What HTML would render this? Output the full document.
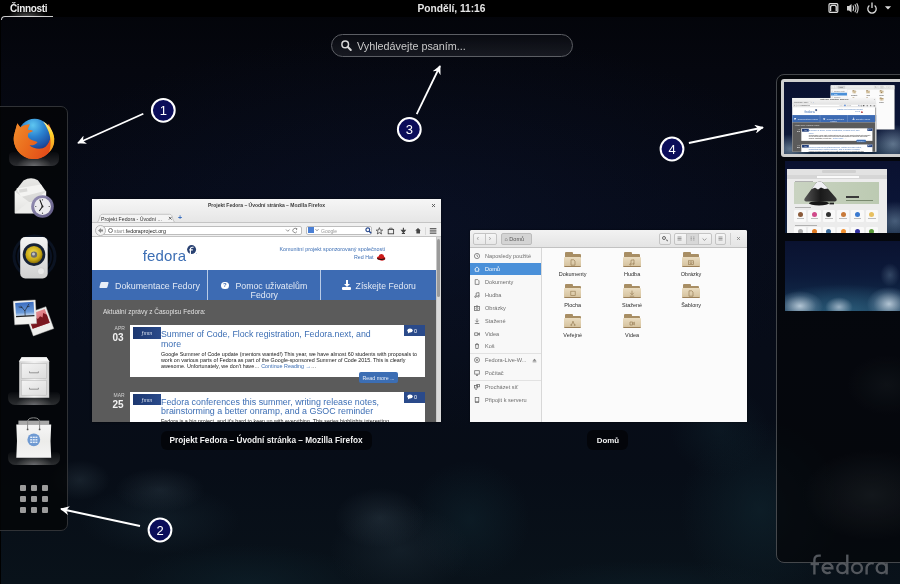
<!DOCTYPE html>
<html><head><meta charset="utf-8">
<style>
*{box-sizing:border-box;margin:0;padding:0}
html,body{width:900px;height:584px;overflow:hidden;background:#05070e;font-family:"Liberation Sans",sans-serif;position:relative}
.a{position:absolute}
.t{line-height:10px;white-space:nowrap}
.dot{width:6px;height:6px;background:#9c9c9c;border-radius:1px}
.glow{border-radius:4px 4px 7px 7px;background:radial-gradient(ellipse 35% 70% at 50% 100%,rgba(255,255,255,0.30),rgba(255,255,255,0) 100%),linear-gradient(rgba(255,255,255,0.02),rgba(255,255,255,0.16))}
.wall{background:radial-gradient(ellipse 80% 30% at 50% 100%,#12283e,rgba(0,0,0,0) 80%),linear-gradient(#0a1130,#0b1536 60%,#0e1e3c)}
.wall3{background:radial-gradient(ellipse 90% 45% at 50% 100%,#2a5a78,rgba(0,0,0,0) 85%),linear-gradient(#0a1230,#0c1a3a 50%,#13304e)}
#bg{left:0;top:0;width:900px;height:584px;background:
 radial-gradient(ellipse 30px 20px at 80px 480px, rgba(60,78,90,0.30), rgba(0,0,0,0) 100%),
 radial-gradient(ellipse 45px 22px at 160px 490px, rgba(60,78,90,0.30), rgba(0,0,0,0) 100%),
 radial-gradient(ellipse 80px 35px at 160px 520px, rgba(30,50,62,0.35), rgba(0,0,0,0) 100%),
 radial-gradient(ellipse 45px 30px at 380px 518px, rgba(60,78,90,0.32), rgba(0,0,0,0) 100%),
 radial-gradient(ellipse 70px 45px at 400px 550px, rgba(40,58,70,0.32), rgba(0,0,0,0) 100%),
 radial-gradient(ellipse 60px 60px at 470px 520px, rgba(16,38,48,0.5), rgba(0,0,0,0) 100%),
 radial-gradient(ellipse 50px 45px at 720px 430px, rgba(16,36,46,0.45), rgba(0,0,0,0) 100%),
 radial-gradient(ellipse 80px 90px at 760px 510px, rgba(16,38,48,0.6), rgba(0,0,0,0) 100%),
 radial-gradient(ellipse 120px 40px at 250px 584px, rgba(14,34,44,0.6), rgba(0,0,0,0) 100%),
 radial-gradient(ellipse 140px 30px at 650px 590px, rgba(14,34,44,0.5), rgba(0,0,0,0) 100%),
 radial-gradient(ellipse 420px 200px at 420px 230px, rgba(14,24,52,0.40), rgba(0,0,0,0) 100%),
 linear-gradient(180deg,#030409 0%,#05070f 12%,#060a17 35%,#070c18 60%,#070d17 80%,#09121a 100%);}
</style></head><body>
<div id="bg" class="a"></div>
<div class="a" style="left:0;top:0;width:900px;height:584px;will-change:transform"><div class="a" id="left-edge" style="left:0;top:0;width:1px;height:584px;background:#000"></div>
<!-- TOP BAR -->
<div class="a" style="left:0;top:0;width:900px;height:17px;background:#000"></div>
<div class="a t" style="left:10px;top:3.5px;font-size:10px;font-weight:bold;color:#ececec;letter-spacing:-0.35px">Činnosti</div>
<div class="a" style="left:1px;top:16px;width:52px;height:4px;border-top:1.5px solid #e0e0e0;border-left:1.5px solid #e0e0e0;border-top-left-radius:4px;opacity:0.9"></div>
<div class="a" style="left:6px;top:10px;width:42px;height:7px;background:radial-gradient(ellipse at 50% 100%,rgba(255,255,255,0.35),rgba(255,255,255,0) 70%)"></div>
<div class="a t" style="left:417.5px;top:3.5px;font-size:10.2px;font-weight:bold;color:#e6e6e6">Pondělí, 11:16</div>
<svg class="a" style="left:826px;top:1px" width="70" height="14" viewBox="0 0 70 14">
 <rect x="3" y="2.7" width="8.8" height="8.6" rx="1" fill="none" stroke="#dcdcdc" stroke-width="1.2"/>
 <path d="M4.6 10.2 L4.6 5.4 L5.8 4.3 L9 4.3 L10.2 5.4 L10.2 10.2" fill="none" stroke="#dcdcdc" stroke-width="1.3"/>
 <path d="M21 5 L23 5 L25.5 3 L25.5 11.5 L23 9.5 L21 9.5 Z" fill="#d0d0d0"/>
 <path d="M27 4.5 Q28.5 7.2 27 10 M28.9 3.2 Q31.2 7.2 28.9 11.3 M30.7 2.2 Q33.6 7.2 30.7 12.2" fill="none" stroke="#d6d6d6" stroke-width="1.1"/>
 <path d="M43.4 4.6 A4.2 4.2 0 1 0 48.6 4.6" fill="none" stroke="#dcdcdc" stroke-width="1.3"/>
 <path d="M46 1.4 L46 7" stroke="#dcdcdc" stroke-width="1.3"/>
 <path d="M58.9 5.2 L65.1 5.2 L62 8.4 Z" fill="#dcdcdc"/>
</svg>
<!-- SEARCH -->
<div class="a" style="left:331px;top:34px;width:242px;height:23px;border:1px solid #5c5e64;border-radius:12px;background:linear-gradient(rgba(10,12,18,0.9),rgba(30,32,40,0.75))"></div>
<svg class="a" style="left:340px;top:39px" width="13" height="13" viewBox="0 0 13 13">
 <circle cx="5.2" cy="5.4" r="3.3" fill="none" stroke="#d8d8d8" stroke-width="1.5"/>
 <path d="M7.6 7.8 L10.8 11" stroke="#d8d8d8" stroke-width="2" stroke-linecap="round"/>
</svg>
<div class="a t" style="left:357px;top:40.5px;font-size:10.8px;color:#c9c9c9">Vyhledávejte psaním...</div>
<!-- WINDOW LABELS -->
<div class="a" style="left:161px;top:431px;width:211px;height:19px;border-radius:6px;background:rgba(0,0,0,0.55)"></div>
<div class="a t" style="left:169.5px;top:436.3px;font-size:8.25px;font-weight:bold;color:#f0f0f0">Projekt Fedora – Úvodní stránka – Mozilla Firefox</div>
<div class="a" style="left:587px;top:430px;width:41px;height:20px;border-radius:6px;background:rgba(0,0,0,0.55)"></div>
<div class="a t" style="left:596.7px;top:436px;font-size:7.9px;font-weight:bold;color:#f0f0f0">Domů</div>
<!-- DASH -->
<div class="a" style="left:-8px;top:106px;width:76px;height:425px;border:1px solid #303236;border-radius:7px;background:rgba(4,5,6,0.78)"></div>
<!-- running glows -->
<div class="a glow" style="left:9px;top:152px;width:50px;height:14px"></div>
<div class="a glow" style="left:8px;top:392px;width:52px;height:13px"></div>
<div class="a glow" style="left:8px;top:452px;width:52px;height:13px"></div>
<!-- firefox -->
<svg class="a" style="left:12px;top:117px" width="44" height="44" viewBox="0 0 44 44">
 <defs>
  <radialGradient id="ffg" cx="0.45" cy="0.2" r="0.8"><stop offset="0" stop-color="#5ec6f0"/><stop offset="0.45" stop-color="#2a82d0"/><stop offset="0.8" stop-color="#1f56a8"/><stop offset="1" stop-color="#1a3886"/></radialGradient>
  <linearGradient id="ffo" x1="0" y1="0.1" x2="1" y2="0.6"><stop offset="0" stop-color="#f08a2a"/><stop offset="0.5" stop-color="#ea6a1c"/><stop offset="1" stop-color="#e24a1a"/></linearGradient>
  <linearGradient id="ffy" x1="0" y1="0" x2="0" y2="1"><stop offset="0" stop-color="#fff2a0"/><stop offset="0.4" stop-color="#ffd22a"/><stop offset="1" stop-color="#f39020"/></linearGradient>
 </defs>
 <path d="M2.3 17 A20.2 20.2 0 1 0 42 19.5 L37 7 L22.6 18 Z" fill="url(#ffo)"/>
 <path d="M2.3 17 L5.3 6.2 L9 11 Z" fill="#ef7a22"/>
 <circle cx="22.6" cy="18" r="16.2" fill="url(#ffg)"/>
 <path d="M5.3 6.4 L8 10.5 C11 8 15 7.5 18 7.2 C17 9.5 16 11 15.8 12.8 C18 13 20 13.2 21.1 13.9 C19.5 15 17.5 15.5 16.6 15.8 C15.8 17.5 15.8 19.5 16.2 20.3 C17 22 20 23.5 25.6 24.9 C24 27.5 21 28.6 17.5 28.2 C21 31.5 29 33.5 34 29.5 C36.5 27 38 24 38.6 20 L42.1 21 A20.2 20.2 0 1 1 2.1 18 Z" fill="url(#ffo)"/>
 <path d="M31 4.5 C39 9 43 17 42.2 25 C41.8 29 40 32.5 37 35.5 C39.5 28 39 19 35.5 12 C34.5 9.5 33 7 31 4.5 Z" fill="url(#ffy)"/>
</svg>
<!-- mail (evolution) -->
<svg class="a" style="left:13px;top:176px" width="44" height="44" viewBox="0 0 44 44">
 <defs><linearGradient id="env" x1="0" y1="0" x2="0" y2="1"><stop offset="0" stop-color="#e8e8e6"/><stop offset="1" stop-color="#cfcfcd"/></linearGradient>
 <linearGradient id="envf" x1="0" y1="0" x2="0" y2="1"><stop offset="0" stop-color="#f6f6f4"/><stop offset="1" stop-color="#e2e2e0"/></linearGradient>
 <linearGradient id="clk" x1="0" y1="0" x2="1" y2="1"><stop offset="0" stop-color="#9a94b8"/><stop offset="1" stop-color="#5c5680"/></linearGradient></defs>
 <path d="M1.8 15.6 L10.5 4.6 Q17.7 0.2 24.9 4.2 L33.1 15.6 L33.1 37.2 L1.8 37.2 Z" fill="url(#env)"/>
 <path d="M3.5 12.5 L28 8.5 L31.5 15 L8 21 Z" fill="#f4f4f2"/>
 <rect x="6" y="13.5" width="8" height="3.4" fill="#dadad8" transform="rotate(-9 6 13.5)"/>
 <path d="M1.8 15.6 L17.5 27 L33.1 15.6 L33.1 37.2 L1.8 37.2 Z" fill="url(#envf)"/>
 <path d="M1.8 37.2 L15 26 L20 26 L33.1 37.2 Z" fill="#ededeb"/>
 <circle cx="29.5" cy="30.5" r="11.3" fill="url(#clk)"/>
 <circle cx="29.5" cy="30.5" r="8.4" fill="#ecebee"/>
 <path d="M29.5 30.5 L26.8 23.6 M29.5 30.5 L26.3 35" stroke="#1a1a1a" stroke-width="1.1" fill="none"/>
 <circle cx="29.5" cy="30.5" r="1" fill="#222"/>
 <circle cx="29.5" cy="23.8" r="0.6" fill="#333"/><circle cx="36.2" cy="30.5" r="0.6" fill="#333"/><circle cx="29.5" cy="37.2" r="0.6" fill="#333"/><circle cx="22.8" cy="30.5" r="0.6" fill="#333"/>
</svg>
<!-- rhythmbox -->
<svg class="a" style="left:12px;top:234px" width="46" height="46" viewBox="0 0 46 46">
 <defs><linearGradient id="spk" x1="0" y1="0" x2="0" y2="1"><stop offset="0" stop-color="#f4f4f4"/><stop offset="1" stop-color="#d0d0d0"/></linearGradient>
 <radialGradient id="cone" cx="0.45" cy="0.4" r="0.6"><stop offset="0" stop-color="#f2dc52"/><stop offset="0.7" stop-color="#c8a814"/><stop offset="1" stop-color="#8a7008"/></radialGradient></defs>
 <circle cx="22.5" cy="22.5" r="20.5" fill="none" stroke="#0b1322" stroke-width="3"/>
 <circle cx="22.5" cy="22.5" r="16.5" fill="none" stroke="#0e1a30" stroke-width="2" opacity="0.7"/>
 <rect x="8.2" y="3" width="27.5" height="41.4" rx="5" fill="url(#spk)"/>
 <circle cx="22" cy="20.6" r="11.3" fill="#172236"/>
 <circle cx="22" cy="20.6" r="8.6" fill="url(#cone)"/>
 <circle cx="22" cy="20.6" r="3.2" fill="#6c6c6c"/>
 <circle cx="21.5" cy="20" r="1.5" fill="#c4c4c4"/>
 <circle cx="29" cy="37.2" r="3.5" fill="#e8e8e8" stroke="#c4c4c4" stroke-width="0.5"/>
</svg>
<!-- shotwell -->
<svg class="a" style="left:10px;top:296px" width="48" height="44" viewBox="0 0 48 44">
 <defs><linearGradient id="sky" x1="0" y1="0" x2="0" y2="1"><stop offset="0" stop-color="#3a6cc0"/><stop offset="0.7" stop-color="#6a9ad8"/><stop offset="1" stop-color="#dfe9f5"/></linearGradient>
 <linearGradient id="rsky" x1="0" y1="0" x2="0" y2="1"><stop offset="0" stop-color="#e68a90"/><stop offset="1" stop-color="#c85a64"/></linearGradient></defs>
 <g transform="translate(15.45 18) rotate(-19.7)">
  <rect x="0" y="0" width="21.7" height="23.3" fill="#eeeeec" stroke="#c0c0c0" stroke-width="0.4"/>
  <rect x="1.8" y="1.8" width="18.1" height="14.5" fill="url(#rsky)"/>
  <path d="M1.8 10 L4 8 L6 10 L8 6 L10 9 L13 7 L15 9 L17 5 L19.9 8 L19.9 16.3 L1.8 16.3 Z" fill="#7a1820"/>
 </g>
 <g transform="translate(3.3 5.2) rotate(-3.4)">
  <rect x="0" y="0" width="22" height="23.7" fill="#f2f2f0" stroke="#c4c4c4" stroke-width="0.4"/>
  <rect x="1.8" y="1.8" width="18.4" height="14.2" fill="url(#sky)"/>
  <path d="M11 15.5 L11 10.5 M11 10.5 L7 5 M11 10.5 L15.5 3.5 M8.5 7 L5 6 M13.5 6.5 L16 6" stroke="#1a1a1a" stroke-width="0.6" fill="none"/>
  <rect x="1.8" y="15" width="18.4" height="1.3" fill="#222"/>
 </g>
</svg>
<!-- files -->
<svg class="a" style="left:18px;top:356px" width="32" height="44" viewBox="0 0 32 44">
 <defs><linearGradient id="cab" x1="0" y1="0" x2="1" y2="0"><stop offset="0" stop-color="#cfcfcf"/><stop offset="0.5" stop-color="#f2f2f2"/><stop offset="1" stop-color="#d4d4d4"/></linearGradient>
 <linearGradient id="drw" x1="0" y1="0" x2="1" y2="1"><stop offset="0" stop-color="#f4f4f4"/><stop offset="1" stop-color="#dcdcdc"/></linearGradient></defs>
 <path d="M3.6 1.2 L28.6 1.2 L31.2 5.3 L31.2 41.8 L1.2 41.8 L1.2 5.3 Z" fill="url(#cab)"/>
 <path d="M3.6 1.2 L28.6 1.2 L31.2 5.3 L1.2 5.3 Z" fill="#f6f6f6"/>
 <rect x="3.4" y="7.4" width="25.2" height="14.9" fill="url(#drw)" stroke="#b4b4b4" stroke-width="0.5"/>
 <rect x="3.4" y="24.3" width="25.2" height="14.9" fill="url(#drw)" stroke="#b4b4b4" stroke-width="0.5"/>
 <path d="M11.5 15.4 L11.5 16.8 L20.4 16.8 L20.4 15.4 M11.5 31.8 L11.5 33.2 L20.4 33.2 L20.4 31.8" fill="none" stroke="#8a8a8a" stroke-width="0.9"/>
</svg>
<!-- software -->
<svg class="a" style="left:14px;top:416px" width="40" height="44" viewBox="0 0 40 44">
 <defs><linearGradient id="bag" x1="0" y1="0" x2="0" y2="1"><stop offset="0" stop-color="#f6f6f6"/><stop offset="0.5" stop-color="#ececea"/><stop offset="1" stop-color="#f4f4f4"/></linearGradient></defs>
 <rect x="4.4" y="4.6" width="30.8" height="4" fill="#a8a8a8"/>
 <path d="M2.3 8.4 L37.2 8.4 Q35.8 25 37.2 41.8 L2.3 41.8 Q3.7 25 2.3 8.4 Z" fill="url(#bag)"/>
 <path d="M13.6 13.2 L13.6 6 Q13.6 1.8 19.6 1.8 Q25.6 1.8 25.6 6 L25.6 13.2" fill="none" stroke="#8a8a8a" stroke-width="1"/>
 <circle cx="13.6" cy="13.4" r="0.9" fill="#555"/><circle cx="25.6" cy="13.4" r="0.9" fill="#555"/>
 <circle cx="19.8" cy="23.8" r="6.4" fill="#6f9ad2"/>
 <g fill="#e4eefa"><rect x="16.2" y="20.6" width="2" height="1.4"/><rect x="18.8" y="20.6" width="2" height="1.4"/><rect x="21.4" y="20.6" width="2" height="1.4"/><rect x="16.2" y="23.1" width="2" height="1.4"/><rect x="18.8" y="23.1" width="2" height="1.4"/><rect x="21.4" y="23.1" width="2" height="1.4"/><rect x="16.2" y="25.6" width="2" height="1.4"/><rect x="18.8" y="25.6" width="2" height="1.4"/><rect x="21.4" y="25.6" width="2" height="1.4"/></g>
</svg>
<!-- app grid -->
<div class="a dot" style="left:20px;top:485px"></div><div class="a dot" style="left:31px;top:485px"></div><div class="a dot" style="left:42px;top:485px"></div>
<div class="a dot" style="left:20px;top:496px"></div><div class="a dot" style="left:31px;top:496px"></div><div class="a dot" style="left:42px;top:496px"></div>
<div class="a dot" style="left:20px;top:507px"></div><div class="a dot" style="left:31px;top:507px"></div><div class="a dot" style="left:42px;top:507px"></div>

<!-- FIREFOX WINDOW -->
<div class="a win" style="left:92px;top:199px;width:349px;height:223px;background:#fff;overflow:hidden;box-shadow:0 0 2px rgba(0,0,0,0.6)">
  <div class="a" style="left:0;top:0;width:349px;height:23px;background:linear-gradient(#f6f6f6,#e6e6e6)"></div>
  <div class="a t" style="left:116px;top:1.4px;font-size:5px;font-weight:bold;color:#3a3a3a">Projekt Fedora – Úvodní stránka – Mozilla Firefox</div>
  <svg class="a" style="left:338.5px;top:3.5px" width="5" height="5" viewBox="0 0 10 10"><path d="M2 2 L8 8 M8 2 L2 8" stroke="#555" stroke-width="1.8" fill="none"/></svg>
  <!-- tab -->
  <svg class="a" style="left:0;top:14px" width="100" height="10" viewBox="0 14 100 10"><path d="M0 23.5 L4.5 23.5 Q6 23.5 6.8 21 L8.2 16.6 Q8.8 15.3 10.5 15.3 L77.5 15.3 Q79.2 15.3 79.8 16.6 L81.2 21 Q82 23.5 83.5 23.5 L100 23.5" fill="#f4f4f4" stroke="#b4b4b4" stroke-width="0.7"/></svg>
  <div class="a t" style="left:9px;top:14.6px;font-size:5.2px;color:#333">Projekt Fedora - Úvodní ...</div>
  <svg class="a" style="left:76px;top:17px" width="4.5" height="4.5" viewBox="0 0 10 10"><path d="M2 2 L8 8 M8 2 L2 8" stroke="#444" stroke-width="1.7777777777777777" fill="none"/></svg>
  <div class="a t" style="left:86px;top:14.4px;font-size:7px;font-weight:bold;color:#3a6fc0">+</div>
  <!-- nav bar -->
  <div class="a" style="left:0;top:23px;width:349px;height:15px;background:#f0f0f0;border-top:1px solid #c4c4c4;border-bottom:1px solid #c4c4c4"></div>
  <div class="a" style="left:8px;top:27px;width:202px;height:9px;background:#fff;border:1px solid #bdbdbd;border-radius:2px"></div>
  <div class="a" style="left:2.5px;top:25.5px;width:11px;height:11px;background:#f4f4f4;border:1px solid #b8b8b8;border-radius:50%"></div>
  <svg class="a" style="left:4.5px;top:28px" width="7" height="7" viewBox="0 0 7 7"><path d="M1 3.5 L4 1 L4 2.6 L6 2.6 L6 4.4 L4 4.4 L4 6 Z" fill="#8a8a8a"/></svg>
  <div class="a" style="left:16px;top:29px;width:5px;height:5px;border:1px solid #777;border-radius:50%"></div>
  <div class="a t" style="left:22px;top:27px;font-size:5.3px;color:#8a8a8a">start.<span style="color:#222">fedoraproject.org</span></div>
  <svg class="a" style="left:193px;top:28px" width="14" height="7" viewBox="0 0 14 7"><path d="M1 2.5 L2.8 4.3 L4.6 2.5" stroke="#666" stroke-width="0.7" fill="none"/><path d="M11.8 2.2 A2.2 2.2 0 1 0 12 4.5" stroke="#666" stroke-width="0.7" fill="none"/><path d="M10.6 1.2 L12.4 1.6 L11.8 3.2 Z" fill="#666"/></svg>
  <div class="a" style="left:213.5px;top:26.5px;width:66px;height:9px;background:#fff;border:1px solid #bdbdbd;border-radius:2px"></div>
  <div class="a" style="left:216px;top:28px;width:6px;height:6px;background:#4a7fd4"></div>
  <svg class="a" style="left:222.5px;top:29px" width="4" height="4" viewBox="0 0 4 4"><path d="M0.5 1.2 L2 2.8 L3.5 1.2" stroke="#666" stroke-width="0.7" fill="none"/></svg><div class="a t" style="left:229px;top:27px;font-size:5px;color:#999">Google</div>
  <svg class="a" style="left:272.5px;top:27.8px" width="7" height="7" viewBox="0 0 7 7"><circle cx="2.8" cy="2.8" r="1.9" fill="none" stroke="#22448a" stroke-width="1.1"/><path d="M4.2 4.2 L6.2 6.2" stroke="#22448a" stroke-width="1.4"/></svg>
  <svg class="a" style="left:280px;top:27px" width="68" height="10" viewBox="0 0 68 10">
   <path d="M7.4 1.6 L8.3 4.1 L10.6 4.1 L8.8 5.6 L9.5 8 L7.4 6.6 L5.3 8 L6 5.6 L4.2 4.1 L6.5 4.1 Z" fill="none" stroke="#444" stroke-width="0.8"/>
   <rect x="16.2" y="3.4" width="5.4" height="4.4" fill="none" stroke="#444" stroke-width="0.9"/>
   <path d="M17.6 3.4 L17.6 2.2 L20.2 2.2 L20.2 3.4" fill="none" stroke="#444" stroke-width="0.7"/>
   <path d="M31.4 1.8 L31.4 5 M29.6 4.2 L31.4 6.6 L33.2 4.2 Z" stroke="#444" stroke-width="1.1" fill="#444"/>
   <rect x="29.8" y="7" width="3.2" height="1" fill="#444"/>
   <path d="M43.2 4.6 L46 2 L48.8 4.6 L48 4.6 L48 7.6 L44.4 7.6 L44.4 4.6 Z" fill="#444"/>
   <rect x="53.3" y="1.2" width="0.6" height="7.6" fill="#c8c8c8"/>
   <rect x="57.8" y="2.2" width="6.6" height="1.1" fill="#444"/>
   <rect x="57.8" y="4.4" width="6.6" height="1.1" fill="#444"/>
   <rect x="57.8" y="6.6" width="6.6" height="1.1" fill="#444"/>
  </svg>
  <!-- page header -->
  <div class="a" style="left:50.8px;top:45.7px;font-size:15px;line-height:22px;color:#3c6eb4;letter-spacing:0.15px">fedora</div>
  <svg class="a" style="left:95px;top:45.6px" width="10" height="10" viewBox="0 0 10 10"><circle cx="4.6" cy="4.6" r="4.5" fill="#294172"/><path d="M3.4 9 L3.4 4.2 Q3.4 2.2 5.4 2.2 L6.6 2.2 M2.2 4.9 L5.8 4.9" stroke="#fff" stroke-width="1.15" fill="none"/><circle cx="9.4" cy="8.6" r="0.4" fill="#3c6eb4"/></svg>
  <div class="a t" style="left:187.5px;top:45px;font-size:5.4px;color:#3c6eb4">Komunitní projekt sponzorovaný společností</div>
  <div class="a t" style="left:262px;top:52.7px;font-size:5.3px;color:#3c6eb4">Red Hat</div>
  <svg class="a" style="left:283.5px;top:53.5px" width="10" height="9" viewBox="0 0 10 9"><path d="M1 5.5 Q0.5 3.5 2.5 3.5 Q3 0.8 5.5 1 Q8 1.2 8.2 3.8 Q9.8 4.5 9.2 6.2 Q8 8 5 7.6 Q1.5 7.2 1 5.5 Z" fill="#cc1a1a"/><path d="M1.2 5.6 Q5 7.4 9 5.8" stroke="#111" stroke-width="1" fill="none"/></svg>
  <!-- blue nav -->
  <div class="a" style="left:0;top:71px;width:349px;height:30px;background:#3d6bb3"></div>
  <div class="a" style="left:114.5px;top:71px;width:1px;height:30px;background:#b9cbe6"></div>
  <div class="a" style="left:228.2px;top:71px;width:1px;height:30px;background:#b9cbe6"></div>
  <div class="a" style="left:8px;top:83px;width:8px;height:6px;background:#e8eef8;transform:skewX(-15deg);border-radius:1px"></div>
  <div class="a t" style="left:23px;top:81.5px;font-size:8.9px;color:#e3eaf5">Dokumentace Fedory</div>
  <div class="a" style="left:129px;top:82.5px;width:7.5px;height:7.5px;border-radius:50%;background:#fff;color:#3d6bb3;font-size:6px;line-height:7.5px;text-align:center;font-weight:bold">?</div>
  <div class="a t" style="left:143.4px;top:81.5px;font-size:8.8px;color:#e3eaf5">Pomoc uživatelům</div>
  <div class="a t" style="left:158.6px;top:90.7px;font-size:8.8px;color:#e3eaf5">Fedory</div>
  <div class="a" style="left:250px;top:88px;width:9px;height:3px;background:#fff;border-radius:1px"></div>
  <div class="a" style="left:253.5px;top:81px;width:2px;height:5px;background:#fff"></div>
  <div class="a" style="left:251.5px;top:84.5px;width:0;height:0;border-left:3px solid transparent;border-right:3px solid transparent;border-top:3px solid #fff"></div>
  <div class="a t" style="left:263.6px;top:81.5px;font-size:8.7px;color:#e3eaf5">Získejte Fedoru</div>
  <!-- grey news -->
  <div class="a" style="left:0;top:101px;width:349px;height:122px;background:#5b5b5b"></div>
  <div class="a t" style="left:11px;top:108.3px;font-size:6.5px;color:#e0e0e0">Aktuální zprávy z Časopisu Fedora:</div>
  <div class="a t" style="left:22.6px;top:124px;font-size:5px;color:#cfcfcf">APR</div>
  <div class="a t" style="left:20.5px;top:133.5px;font-size:10px;font-weight:bold;color:#f2f2f2">03</div>
  <div class="a" style="left:38.3px;top:126px;width:294.7px;height:52.4px;background:#fff"></div>
  <div class="a" style="left:41px;top:128px;width:28px;height:11.7px;background:linear-gradient(90deg,#1c3770,#2a4a8a);"></div>
  <div class="a t" style="left:49px;top:128.8px;font-size:5px;color:#dfe6f2;font-style:italic">ƒmm</div>
  <div class="a t" style="left:69px;top:130.1px;font-size:8.8px;color:#3c6eb4;white-space:nowrap">Summer of Code, Flock registration, Fedora.next, and</div>
  <div class="a t" style="left:69px;top:139.6px;font-size:8.8px;color:#3c6eb4">more</div>
  <div class="a" style="left:69px;top:151.8px;width:260px;font-size:5.36px;line-height:6.1px;color:#1a1a1a">Google Summer of Code update (mentors wanted!) This year, we have almost 60 students with proposals to work on various parts of Fedora as part of the Google-sponsored Summer of Code 2015. This is clearly awesome. Unfortunately, we don't have… <span style="color:#3c6eb4">Continue Reading →</span>…</div>
  <div class="a" style="left:311.9px;top:126px;width:21px;height:11px;background:#2a4a8a"></div>
  <svg class="a" style="left:314.5px;top:128.5px" width="6" height="6" viewBox="0 0 6 6"><ellipse cx="3" cy="2.6" rx="2.7" ry="2" fill="#fff"/><path d="M1.2 3.8 L0.8 5.6 L2.8 4.3 Z" fill="#fff"/></svg><div class="a t" style="left:322px;top:126.5px;font-size:5.5px;color:#fff">0</div>
  <div class="a" style="left:267px;top:173.4px;width:38.7px;height:10.2px;background:#3c6eb4;border-radius:2px"></div>
  <div class="a t" style="left:270.5px;top:173.5px;font-size:5.3px;color:#e8eef8">Read more ...</div>
  <div class="a t" style="left:21.5px;top:191.3px;font-size:5px;color:#cfcfcf">MAR</div>
  <div class="a t" style="left:20.5px;top:200.7px;font-size:10px;font-weight:bold;color:#f2f2f2">25</div>
  <div class="a" style="left:38.3px;top:192.8px;width:294.7px;height:40px;background:#fff"></div>
  <div class="a" style="left:41px;top:194.8px;width:28px;height:11.7px;background:linear-gradient(90deg,#1c3770,#2a4a8a);"></div>
  <div class="a t" style="left:49px;top:195.6px;font-size:5px;color:#dfe6f2;font-style:italic">ƒmm</div>
  <div class="a t" style="left:69px;top:198px;font-size:8.9px;color:#3c6eb4;white-space:nowrap">Fedora conferences this summer, writing release notes,</div>
  <div class="a t" style="left:69px;top:207px;font-size:8.9px;color:#3c6eb4;white-space:nowrap">brainstorming a better onramp, and a GSOC reminder</div>
  <div class="a t" style="left:69px;top:216.5px;font-size:5.36px;color:#1a1a1a;white-space:nowrap">Fedora is a big project, and it's hard to keep up with everything. This series highlights interesting</div>
  <div class="a" style="left:311.9px;top:192.8px;width:21px;height:11px;background:#2a4a8a"></div>
  <svg class="a" style="left:314.5px;top:195.3px" width="6" height="6" viewBox="0 0 6 6"><ellipse cx="3" cy="2.6" rx="2.7" ry="2" fill="#fff"/><path d="M1.2 3.8 L0.8 5.6 L2.8 4.3 Z" fill="#fff"/></svg><div class="a t" style="left:322px;top:193.3px;font-size:5.5px;color:#fff">0</div>
  <!-- scrollbar -->
  <div class="a" style="left:344px;top:38px;width:5px;height:185px;background:#d9d9d9;border-left:1px solid #c8c8c8"></div>
  <div class="a" style="left:345px;top:40px;width:3px;height:58px;background:#9a9a9a;border-radius:2px"></div>
</div>

<!-- NAUTILUS WINDOW -->
<div class="a win" style="left:470px;top:230px;width:277px;height:192px;background:#fbfbfb;overflow:hidden;border-radius:2px 2px 0 0;box-shadow:0 0 2px rgba(0,0,0,0.6)">
  <div class="a" style="left:0;top:0;width:277px;height:17.5px;background:linear-gradient(#f2f2f2,#e4e4e4);border-bottom:1px solid #c2c2c2"></div>
  <div class="a" style="left:2.7px;top:2.7px;width:24px;height:12.3px;background:linear-gradient(#f6f6f6,#e8e8e8);border:1px solid #c4c4c4;border-radius:2px"></div>
  <div class="a" style="left:14.5px;top:3px;width:1px;height:12px;background:#c4c4c4"></div>
  <div class="a t" style="left:6.5px;top:3.6px;font-size:8px;color:#999">‹</div>
  <div class="a t" style="left:18.5px;top:3.6px;font-size:8px;color:#999">›</div>
  <div class="a" style="left:30.5px;top:2.7px;width:31.2px;height:12.3px;background:#d4d4d4;border:1px solid #bcbcbc;border-radius:2px"></div>
  <div class="a t" style="left:34.5px;top:3.8px;font-size:5.5px;color:#555">⌂ Domů</div>
  <div class="a" style="left:188.6px;top:2.7px;width:12.7px;height:12.3px;background:linear-gradient(#f6f6f6,#e8e8e8);border:1px solid #c4c4c4;border-radius:2px"></div>
  <div class="a" style="left:192.3px;top:6px;width:4px;height:4px;border:1px solid #666;border-radius:50%"></div>
  <div class="a" style="left:196px;top:9.5px;width:2.2px;height:1px;background:#666;transform:rotate(45deg)"></div>
  <div class="a" style="left:203.5px;top:2.7px;width:38px;height:12.3px;background:linear-gradient(#f6f6f6,#e8e8e8);border:1px solid #c4c4c4;border-radius:2px"></div>
  <div class="a" style="left:216px;top:2.7px;width:12.5px;height:12.3px;background:#d8d8d8;border:1px solid #c4c4c4"></div>
  <svg class="a" style="left:207.3px;top:6.4px" width="5" height="5" viewBox="0 0 5 5"><path d="M0.5 1 L4.5 1 M0.5 2.5 L4.5 2.5 M0.5 4 L4.5 4" stroke="#666" stroke-width="0.6"/></svg>
  <svg class="a" style="left:219.8px;top:6.4px" width="5" height="5" viewBox="0 0 5 5"><path d="M0.5 1 L2 1 M3 1 L4.5 1 M0.5 2.5 L2 2.5 M3 2.5 L4.5 2.5 M0.5 4 L2 4 M3 4 L4.5 4" stroke="#888" stroke-width="0.6"/></svg>
  <svg class="a" style="left:232px;top:6.5px" width="5" height="5" viewBox="0 0 5 5"><path d="M0.6 1.5 L2.5 3.4 L4.4 1.5" stroke="#666" stroke-width="0.6" fill="none"/></svg>
  <div class="a" style="left:244.7px;top:2.7px;width:11.8px;height:12.3px;background:linear-gradient(#f6f6f6,#e8e8e8);border:1px solid #c4c4c4;border-radius:2px"></div>
  <svg class="a" style="left:248.1px;top:6.4px" width="5" height="5" viewBox="0 0 5 5"><path d="M0.5 1 L4.5 1 M0.5 2.5 L4.5 2.5 M0.5 4 L4.5 4" stroke="#666" stroke-width="0.6"/></svg>
  <div class="a" style="left:259.6px;top:3px;width:1px;height:12px;background:#cfcfcf"></div>
  <svg class="a" style="left:266px;top:6.3px" width="5" height="5" viewBox="0 0 10 10"><path d="M2 2 L8 8 M8 2 L2 8" stroke="#777" stroke-width="1.4" fill="none"/></svg>
  <!-- sidebar -->
  <div class="a" style="left:0;top:18px;width:71.5px;height:174px;background:#f8f8f8;border-right:1px solid #d8d8d8"></div>
  <div class="a" style="left:0;top:32.8px;width:71px;height:12px;background:#4a90d9"></div>
  <div class="a" style="left:0;top:123.3px;width:71px;height:1px;background:#e2e2e2"></div>
  <div class="a" style="left:0;top:149.7px;width:71px;height:1px;background:#e2e2e2"></div>
  <div class="a t" style="left:15px;top:21px;font-size:5.6px;color:#6e6e6e">Naposledy použité</div>
  <div class="a t" style="left:15px;top:33.8px;font-size:5.6px;color:#fff">Domů</div>
  <div class="a t" style="left:15px;top:47px;font-size:5.6px;color:#6e6e6e">Dokumenty</div>
  <div class="a t" style="left:15px;top:59.8px;font-size:5.6px;color:#6e6e6e">Hudba</div>
  <div class="a t" style="left:15px;top:72.5px;font-size:5.6px;color:#6e6e6e">Obrázky</div>
  <div class="a t" style="left:15px;top:85.7px;font-size:5.6px;color:#6e6e6e">Stažené</div>
  <div class="a t" style="left:15px;top:98.6px;font-size:5.6px;color:#6e6e6e">Videa</div>
  <div class="a t" style="left:15px;top:111.3px;font-size:5.6px;color:#6e6e6e">Koš</div>
  <div class="a t" style="left:15px;top:125px;font-size:5.6px;color:#6e6e6e">Fedora-Live-W...</div>
  <div class="a t" style="left:15px;top:138px;font-size:5.6px;color:#6e6e6e">Počítač</div>
  <div class="a t" style="left:15px;top:151.7px;font-size:5.6px;color:#6e6e6e">Procházet síť</div>
  <div class="a t" style="left:15px;top:165px;font-size:5.6px;color:#6e6e6e">Připojit k serveru</div>
  <svg class="a" style="left:4.4px;top:23px" width="6" height="6" viewBox="0 0 6 6"><g fill="none" stroke="#6a6a6a" stroke-width="0.75"><circle cx="3" cy="3" r="2.6"/><path d="M3 1.6 L3 3 L4 3.8"/></g></svg>
  <svg class="a" style="left:4.4px;top:35.8px" width="6" height="6" viewBox="0 0 6 6"><g fill="none" stroke="#fff" stroke-width="0.75"><path d="M0.6 3.2 L3 0.9 L5.4 3.2 M1.3 2.6 L1.3 5.3 L4.7 5.3 L4.7 2.6"/></g></svg>
  <svg class="a" style="left:4.4px;top:49px" width="6" height="6" viewBox="0 0 6 6"><g fill="none" stroke="#6a6a6a" stroke-width="0.75"><path d="M1.2 0.6 L3.8 0.6 L5 1.8 L5 5.4 L1.2 5.4 Z"/></g></svg>
  <svg class="a" style="left:4.4px;top:61.8px" width="6" height="6" viewBox="0 0 6 6"><g fill="none" stroke="#6a6a6a" stroke-width="0.75"><path d="M2.2 4.6 L2.2 1 L5 0.6 L5 4.2"/><circle cx="1.5" cy="4.7" r="0.8"/><circle cx="4.3" cy="4.3" r="0.8"/></g></svg>
  <svg class="a" style="left:4.4px;top:74.5px" width="6" height="6" viewBox="0 0 6 6"><g fill="none" stroke="#6a6a6a" stroke-width="0.75"><rect x="0.6" y="1.6" width="4.8" height="3.8"/><circle cx="3" cy="3.5" r="1"/><path d="M2 1.6 L2.4 0.8 L3.6 0.8 L4 1.6"/></g></svg>
  <svg class="a" style="left:4.4px;top:87.7px" width="6" height="6" viewBox="0 0 6 6"><g fill="none" stroke="#6a6a6a" stroke-width="0.75"><path d="M3 0.5 L3 4 M1.4 2.6 L3 4.3 L4.6 2.6 M0.8 5.5 L5.2 5.5"/></g></svg>
  <svg class="a" style="left:4.4px;top:100.6px" width="6" height="6" viewBox="0 0 6 6"><g fill="none" stroke="#6a6a6a" stroke-width="0.75"><path d="M0.6 1.8 L3.8 1.8 L3.8 4.4 L0.6 4.4 Z M3.8 3.1 L5.5 1.9 L5.5 4.3 Z"/></g></svg>
  <svg class="a" style="left:4.4px;top:113.3px" width="6" height="6" viewBox="0 0 6 6"><g fill="none" stroke="#6a6a6a" stroke-width="0.75"><path d="M1 1.6 L5 1.6 M1.5 1.6 L1.8 5.5 L4.2 5.5 L4.5 1.6 M2.3 1.6 L2.3 0.7 L3.7 0.7 L3.7 1.6"/></g></svg>
  <svg class="a" style="left:4.4px;top:127px" width="6" height="6" viewBox="0 0 6 6"><g fill="none" stroke="#6a6a6a" stroke-width="0.75"><circle cx="3" cy="3" r="2.5"/><circle cx="3" cy="3" r="0.7"/></g></svg>
  <svg class="a" style="left:4.4px;top:140px" width="6" height="6" viewBox="0 0 6 6"><g fill="none" stroke="#6a6a6a" stroke-width="0.75"><rect x="0.7" y="0.7" width="4.6" height="3.4"/><path d="M2 5.4 L4 5.4 M3 4.1 L3 5.4"/></g></svg>
  <svg class="a" style="left:4.4px;top:153.7px" width="6" height="6" viewBox="0 0 6 6"><g fill="none" stroke="#6a6a6a" stroke-width="0.75"><rect x="0.5" y="1.5" width="3" height="2.5"/><rect x="2.8" y="0.6" width="2.7" height="2.2"/><path d="M1.2 5.3 L3 5.3"/></g></svg>
  <svg class="a" style="left:4.4px;top:167px" width="6" height="6" viewBox="0 0 6 6"><g fill="none" stroke="#6a6a6a" stroke-width="0.75"><rect x="1.2" y="0.6" width="3.6" height="4.2"/><path d="M1 5.5 L5 5.5"/></g></svg>
  <svg class="a" style="left:62px;top:127.5px" width="5" height="5" viewBox="0 0 5 5"><path d="M0.6 2.8 L2.5 0.8 L4.4 2.8 Z M0.6 3.6 L4.4 3.6 L4.4 4.3 L0.6 4.3 Z" fill="#777"/></svg>
  <div class="a" style="left:95px;top:22.3px;width:8px;height:4px;background:#a88e64;border-radius:1px 1px 0 0"></div>
  <div class="a" style="left:95px;top:24.3px;width:16px;height:5px;background:#a88e64;border-radius:1px"></div>
  <div class="a" style="left:94px;top:27.0px;width:17.4px;height:10.3px;background:linear-gradient(#eadcc0,#d6c39f);border-bottom:1px solid #9c8058;border-radius:1px"></div>
  <svg class="a" style="left:99.7px;top:28.6px" width="6" height="7" viewBox="0 0 6 7"><g fill="none" stroke="#9a8058" stroke-width="0.7"><path d="M1 0.8 L3.8 0.8 L5 2 L5 6.2 L1 6.2 Z"/></g></svg>
  <div class="a t" style="left:72.7px;width:60px;text-align:center;top:39.10000000000002px;font-size:5.5px;color:#2a2a2a">Dokumenty</div>
  <div class="a" style="left:154.4px;top:22.3px;width:8px;height:4px;background:#a88e64;border-radius:1px 1px 0 0"></div>
  <div class="a" style="left:154.4px;top:24.3px;width:16px;height:5px;background:#a88e64;border-radius:1px"></div>
  <div class="a" style="left:153.4px;top:27.0px;width:17.4px;height:10.3px;background:linear-gradient(#eadcc0,#d6c39f);border-bottom:1px solid #9c8058;border-radius:1px"></div>
  <svg class="a" style="left:159.1px;top:28.6px" width="6" height="7" viewBox="0 0 6 7"><g fill="none" stroke="#9a8058" stroke-width="0.7"><path d="M2 5.4 L2 1.2 L5 0.8 L5 4.8"/><circle cx="1.4" cy="5.4" r="0.7"/><circle cx="4.4" cy="4.9" r="0.7"/></g></svg>
  <div class="a t" style="left:132.1px;width:60px;text-align:center;top:39.10000000000002px;font-size:5.5px;color:#2a2a2a">Hudba</div>
  <div class="a" style="left:213.4px;top:22.3px;width:8px;height:4px;background:#a88e64;border-radius:1px 1px 0 0"></div>
  <div class="a" style="left:213.4px;top:24.3px;width:16px;height:5px;background:#a88e64;border-radius:1px"></div>
  <div class="a" style="left:212.4px;top:27.0px;width:17.4px;height:10.3px;background:linear-gradient(#eadcc0,#d6c39f);border-bottom:1px solid #9c8058;border-radius:1px"></div>
  <svg class="a" style="left:218.1px;top:28.6px" width="6" height="7" viewBox="0 0 6 7"><g fill="none" stroke="#9a8058" stroke-width="0.7"><rect x="0.6" y="1.8" width="4.8" height="3.8"/><circle cx="3" cy="3.7" r="1"/></g></svg>
  <div class="a t" style="left:191.1px;width:60px;text-align:center;top:39.10000000000002px;font-size:5.5px;color:#2a2a2a">Obrázky</div>
  <div class="a" style="left:95px;top:53.5px;width:8px;height:4px;background:#a88e64;border-radius:1px 1px 0 0"></div>
  <div class="a" style="left:95px;top:55.5px;width:16px;height:5px;background:#a88e64;border-radius:1px"></div>
  <div class="a" style="left:94px;top:58.2px;width:17.4px;height:10.3px;background:linear-gradient(#eadcc0,#d6c39f);border-bottom:1px solid #9c8058;border-radius:1px"></div>
  <svg class="a" style="left:99.7px;top:59.8px" width="6" height="7" viewBox="0 0 6 7"><g fill="none" stroke="#9a8058" stroke-width="0.7"><rect x="0.8" y="1.2" width="4.4" height="4.4"/></g></svg>
  <div class="a t" style="left:72.7px;width:60px;text-align:center;top:69.89999999999998px;font-size:5.5px;color:#2a2a2a">Plocha</div>
  <div class="a" style="left:154.4px;top:53.5px;width:8px;height:4px;background:#a88e64;border-radius:1px 1px 0 0"></div>
  <div class="a" style="left:154.4px;top:55.5px;width:16px;height:5px;background:#a88e64;border-radius:1px"></div>
  <div class="a" style="left:153.4px;top:58.2px;width:17.4px;height:10.3px;background:linear-gradient(#eadcc0,#d6c39f);border-bottom:1px solid #9c8058;border-radius:1px"></div>
  <svg class="a" style="left:159.1px;top:59.8px" width="6" height="7" viewBox="0 0 6 7"><g fill="none" stroke="#9a8058" stroke-width="0.7"><path d="M3 0.6 L3 4.6 M1.2 2.8 L3 4.8 L4.8 2.8 M0.8 6.2 L5.2 6.2"/></g></svg>
  <div class="a t" style="left:132.1px;width:60px;text-align:center;top:69.89999999999998px;font-size:5.5px;color:#2a2a2a">Stažené</div>
  <div class="a" style="left:213.4px;top:53.5px;width:8px;height:4px;background:#a88e64;border-radius:1px 1px 0 0"></div>
  <div class="a" style="left:213.4px;top:55.5px;width:16px;height:5px;background:#a88e64;border-radius:1px"></div>
  <div class="a" style="left:212.4px;top:58.2px;width:17.4px;height:10.3px;background:linear-gradient(#eadcc0,#d6c39f);border-bottom:1px solid #9c8058;border-radius:1px"></div>
  <svg class="a" style="left:218.1px;top:59.8px" width="6" height="7" viewBox="0 0 6 7"><g fill="none" stroke="#9a8058" stroke-width="0.7"><path d="M1 0.8 L3.8 0.8 L5 2 L5 6.2 L1 6.2 Z"/></g></svg>
  <div class="a t" style="left:191.1px;width:60px;text-align:center;top:69.89999999999998px;font-size:5.5px;color:#2a2a2a">Šablony</div>
  <div class="a" style="left:95px;top:83.5px;width:8px;height:4px;background:#a88e64;border-radius:1px 1px 0 0"></div>
  <div class="a" style="left:95px;top:85.5px;width:16px;height:5px;background:#a88e64;border-radius:1px"></div>
  <div class="a" style="left:94px;top:88.2px;width:17.4px;height:10.3px;background:linear-gradient(#eadcc0,#d6c39f);border-bottom:1px solid #9c8058;border-radius:1px"></div>
  <svg class="a" style="left:99.7px;top:89.8px" width="6" height="7" viewBox="0 0 6 7"><g fill="none" stroke="#9a8058" stroke-width="0.7"><circle cx="1.3" cy="5" r="0.6"/><circle cx="3" cy="2" r="0.6"/><circle cx="4.7" cy="5" r="0.6"/><path d="M1.6 4.5 L2.7 2.5 M3.3 2.5 L4.4 4.5"/></g></svg>
  <div class="a t" style="left:72.7px;width:60px;text-align:center;top:100.39999999999998px;font-size:5.5px;color:#2a2a2a">Veřejné</div>
  <div class="a" style="left:154.4px;top:83.5px;width:8px;height:4px;background:#a88e64;border-radius:1px 1px 0 0"></div>
  <div class="a" style="left:154.4px;top:85.5px;width:16px;height:5px;background:#a88e64;border-radius:1px"></div>
  <div class="a" style="left:153.4px;top:88.2px;width:17.4px;height:10.3px;background:linear-gradient(#eadcc0,#d6c39f);border-bottom:1px solid #9c8058;border-radius:1px"></div>
  <svg class="a" style="left:159.1px;top:89.8px" width="6" height="7" viewBox="0 0 6 7"><g fill="none" stroke="#9a8058" stroke-width="0.7"><path d="M1 2 L3.6 2 L3.6 5 L1 5 Z M3.6 3.5 L5.4 2.2 L5.4 4.8 Z"/></g></svg>
  <div class="a t" style="left:132.1px;width:60px;text-align:center;top:100.39999999999998px;font-size:5.5px;color:#2a2a2a">Videa</div>
</div>
<!-- WORKSPACES -->
<div class="a" style="left:776px;top:74px;width:141px;height:489px;border:1px solid #45484c;border-radius:8px;background:radial-gradient(ellipse 70px 45px at 95px 420px, rgba(60,66,70,0.26), rgba(0,0,0,0) 100%),radial-gradient(ellipse 40px 30px at 110px 310px, rgba(60,66,70,0.16), rgba(0,0,0,0) 100%),radial-gradient(ellipse 30px 25px at 60px 205px, rgba(60,64,68,0.15), rgba(0,0,0,0) 100%),rgba(4,6,8,0.7)"></div>
<div class="a" style="left:781px;top:79px;width:125px;height:78px;border:3px solid #d0d0d0;border-radius:3px;background:#000"></div>
<div class="a wall" style="left:784px;top:82px;width:116px;height:71.7px;overflow:hidden">
 <div class="a" style="left:-16px;top:52px;width:44px;height:30px;border-radius:50%;background:radial-gradient(ellipse,rgba(150,175,195,0.6),rgba(40,70,100,0) 70%)"></div>
 <div class="a" style="left:84px;top:42px;width:50px;height:40px;border-radius:50%;background:radial-gradient(ellipse,rgba(150,175,195,0.6),rgba(40,70,100,0) 70%)"></div>
 <div class="a" style="left:-62.17000000000003px;top:-49.73px;width:0;height:0;transform:scale(0.231);transform-origin:0 0">
<!-- NAUTILUS WINDOW -->
<div class="a win" style="left:470px;top:230px;width:277px;height:192px;background:#fbfbfb;overflow:hidden;border-radius:2px 2px 0 0;box-shadow:0 0 2px rgba(0,0,0,0.6)">
  <div class="a" style="left:0;top:0;width:277px;height:17.5px;background:linear-gradient(#f2f2f2,#e4e4e4);border-bottom:1px solid #c2c2c2"></div>
  <div class="a" style="left:2.7px;top:2.7px;width:24px;height:12.3px;background:linear-gradient(#f6f6f6,#e8e8e8);border:1px solid #c4c4c4;border-radius:2px"></div>
  <div class="a" style="left:14.5px;top:3px;width:1px;height:12px;background:#c4c4c4"></div>
  <div class="a t" style="left:6.5px;top:3.6px;font-size:8px;color:#999">‹</div>
  <div class="a t" style="left:18.5px;top:3.6px;font-size:8px;color:#999">›</div>
  <div class="a" style="left:30.5px;top:2.7px;width:31.2px;height:12.3px;background:#d4d4d4;border:1px solid #bcbcbc;border-radius:2px"></div>
  <div class="a t" style="left:34.5px;top:3.8px;font-size:5.5px;color:#555">⌂ Domů</div>
  <div class="a" style="left:188.6px;top:2.7px;width:12.7px;height:12.3px;background:linear-gradient(#f6f6f6,#e8e8e8);border:1px solid #c4c4c4;border-radius:2px"></div>
  <div class="a" style="left:192.3px;top:6px;width:4px;height:4px;border:1px solid #666;border-radius:50%"></div>
  <div class="a" style="left:196px;top:9.5px;width:2.2px;height:1px;background:#666;transform:rotate(45deg)"></div>
  <div class="a" style="left:203.5px;top:2.7px;width:38px;height:12.3px;background:linear-gradient(#f6f6f6,#e8e8e8);border:1px solid #c4c4c4;border-radius:2px"></div>
  <div class="a" style="left:216px;top:2.7px;width:12.5px;height:12.3px;background:#d8d8d8;border:1px solid #c4c4c4"></div>
  <svg class="a" style="left:207.3px;top:6.4px" width="5" height="5" viewBox="0 0 5 5"><path d="M0.5 1 L4.5 1 M0.5 2.5 L4.5 2.5 M0.5 4 L4.5 4" stroke="#666" stroke-width="0.6"/></svg>
  <svg class="a" style="left:219.8px;top:6.4px" width="5" height="5" viewBox="0 0 5 5"><path d="M0.5 1 L2 1 M3 1 L4.5 1 M0.5 2.5 L2 2.5 M3 2.5 L4.5 2.5 M0.5 4 L2 4 M3 4 L4.5 4" stroke="#888" stroke-width="0.6"/></svg>
  <svg class="a" style="left:232px;top:6.5px" width="5" height="5" viewBox="0 0 5 5"><path d="M0.6 1.5 L2.5 3.4 L4.4 1.5" stroke="#666" stroke-width="0.6" fill="none"/></svg>
  <div class="a" style="left:244.7px;top:2.7px;width:11.8px;height:12.3px;background:linear-gradient(#f6f6f6,#e8e8e8);border:1px solid #c4c4c4;border-radius:2px"></div>
  <svg class="a" style="left:248.1px;top:6.4px" width="5" height="5" viewBox="0 0 5 5"><path d="M0.5 1 L4.5 1 M0.5 2.5 L4.5 2.5 M0.5 4 L4.5 4" stroke="#666" stroke-width="0.6"/></svg>
  <div class="a" style="left:259.6px;top:3px;width:1px;height:12px;background:#cfcfcf"></div>
  <svg class="a" style="left:266px;top:6.3px" width="5" height="5" viewBox="0 0 10 10"><path d="M2 2 L8 8 M8 2 L2 8" stroke="#777" stroke-width="1.4" fill="none"/></svg>
  <!-- sidebar -->
  <div class="a" style="left:0;top:18px;width:71.5px;height:174px;background:#f8f8f8;border-right:1px solid #d8d8d8"></div>
  <div class="a" style="left:0;top:32.8px;width:71px;height:12px;background:#4a90d9"></div>
  <div class="a" style="left:0;top:123.3px;width:71px;height:1px;background:#e2e2e2"></div>
  <div class="a" style="left:0;top:149.7px;width:71px;height:1px;background:#e2e2e2"></div>
  <div class="a t" style="left:15px;top:21px;font-size:5.6px;color:#6e6e6e">Naposledy použité</div>
  <div class="a t" style="left:15px;top:33.8px;font-size:5.6px;color:#fff">Domů</div>
  <div class="a t" style="left:15px;top:47px;font-size:5.6px;color:#6e6e6e">Dokumenty</div>
  <div class="a t" style="left:15px;top:59.8px;font-size:5.6px;color:#6e6e6e">Hudba</div>
  <div class="a t" style="left:15px;top:72.5px;font-size:5.6px;color:#6e6e6e">Obrázky</div>
  <div class="a t" style="left:15px;top:85.7px;font-size:5.6px;color:#6e6e6e">Stažené</div>
  <div class="a t" style="left:15px;top:98.6px;font-size:5.6px;color:#6e6e6e">Videa</div>
  <div class="a t" style="left:15px;top:111.3px;font-size:5.6px;color:#6e6e6e">Koš</div>
  <div class="a t" style="left:15px;top:125px;font-size:5.6px;color:#6e6e6e">Fedora-Live-W...</div>
  <div class="a t" style="left:15px;top:138px;font-size:5.6px;color:#6e6e6e">Počítač</div>
  <div class="a t" style="left:15px;top:151.7px;font-size:5.6px;color:#6e6e6e">Procházet síť</div>
  <div class="a t" style="left:15px;top:165px;font-size:5.6px;color:#6e6e6e">Připojit k serveru</div>
  <svg class="a" style="left:4.4px;top:23px" width="6" height="6" viewBox="0 0 6 6"><g fill="none" stroke="#6a6a6a" stroke-width="0.75"><circle cx="3" cy="3" r="2.6"/><path d="M3 1.6 L3 3 L4 3.8"/></g></svg>
  <svg class="a" style="left:4.4px;top:35.8px" width="6" height="6" viewBox="0 0 6 6"><g fill="none" stroke="#fff" stroke-width="0.75"><path d="M0.6 3.2 L3 0.9 L5.4 3.2 M1.3 2.6 L1.3 5.3 L4.7 5.3 L4.7 2.6"/></g></svg>
  <svg class="a" style="left:4.4px;top:49px" width="6" height="6" viewBox="0 0 6 6"><g fill="none" stroke="#6a6a6a" stroke-width="0.75"><path d="M1.2 0.6 L3.8 0.6 L5 1.8 L5 5.4 L1.2 5.4 Z"/></g></svg>
  <svg class="a" style="left:4.4px;top:61.8px" width="6" height="6" viewBox="0 0 6 6"><g fill="none" stroke="#6a6a6a" stroke-width="0.75"><path d="M2.2 4.6 L2.2 1 L5 0.6 L5 4.2"/><circle cx="1.5" cy="4.7" r="0.8"/><circle cx="4.3" cy="4.3" r="0.8"/></g></svg>
  <svg class="a" style="left:4.4px;top:74.5px" width="6" height="6" viewBox="0 0 6 6"><g fill="none" stroke="#6a6a6a" stroke-width="0.75"><rect x="0.6" y="1.6" width="4.8" height="3.8"/><circle cx="3" cy="3.5" r="1"/><path d="M2 1.6 L2.4 0.8 L3.6 0.8 L4 1.6"/></g></svg>
  <svg class="a" style="left:4.4px;top:87.7px" width="6" height="6" viewBox="0 0 6 6"><g fill="none" stroke="#6a6a6a" stroke-width="0.75"><path d="M3 0.5 L3 4 M1.4 2.6 L3 4.3 L4.6 2.6 M0.8 5.5 L5.2 5.5"/></g></svg>
  <svg class="a" style="left:4.4px;top:100.6px" width="6" height="6" viewBox="0 0 6 6"><g fill="none" stroke="#6a6a6a" stroke-width="0.75"><path d="M0.6 1.8 L3.8 1.8 L3.8 4.4 L0.6 4.4 Z M3.8 3.1 L5.5 1.9 L5.5 4.3 Z"/></g></svg>
  <svg class="a" style="left:4.4px;top:113.3px" width="6" height="6" viewBox="0 0 6 6"><g fill="none" stroke="#6a6a6a" stroke-width="0.75"><path d="M1 1.6 L5 1.6 M1.5 1.6 L1.8 5.5 L4.2 5.5 L4.5 1.6 M2.3 1.6 L2.3 0.7 L3.7 0.7 L3.7 1.6"/></g></svg>
  <svg class="a" style="left:4.4px;top:127px" width="6" height="6" viewBox="0 0 6 6"><g fill="none" stroke="#6a6a6a" stroke-width="0.75"><circle cx="3" cy="3" r="2.5"/><circle cx="3" cy="3" r="0.7"/></g></svg>
  <svg class="a" style="left:4.4px;top:140px" width="6" height="6" viewBox="0 0 6 6"><g fill="none" stroke="#6a6a6a" stroke-width="0.75"><rect x="0.7" y="0.7" width="4.6" height="3.4"/><path d="M2 5.4 L4 5.4 M3 4.1 L3 5.4"/></g></svg>
  <svg class="a" style="left:4.4px;top:153.7px" width="6" height="6" viewBox="0 0 6 6"><g fill="none" stroke="#6a6a6a" stroke-width="0.75"><rect x="0.5" y="1.5" width="3" height="2.5"/><rect x="2.8" y="0.6" width="2.7" height="2.2"/><path d="M1.2 5.3 L3 5.3"/></g></svg>
  <svg class="a" style="left:4.4px;top:167px" width="6" height="6" viewBox="0 0 6 6"><g fill="none" stroke="#6a6a6a" stroke-width="0.75"><rect x="1.2" y="0.6" width="3.6" height="4.2"/><path d="M1 5.5 L5 5.5"/></g></svg>
  <svg class="a" style="left:62px;top:127.5px" width="5" height="5" viewBox="0 0 5 5"><path d="M0.6 2.8 L2.5 0.8 L4.4 2.8 Z M0.6 3.6 L4.4 3.6 L4.4 4.3 L0.6 4.3 Z" fill="#777"/></svg>
  <div class="a" style="left:95px;top:22.3px;width:8px;height:4px;background:#a88e64;border-radius:1px 1px 0 0"></div>
  <div class="a" style="left:95px;top:24.3px;width:16px;height:5px;background:#a88e64;border-radius:1px"></div>
  <div class="a" style="left:94px;top:27.0px;width:17.4px;height:10.3px;background:linear-gradient(#eadcc0,#d6c39f);border-bottom:1px solid #9c8058;border-radius:1px"></div>
  <svg class="a" style="left:99.7px;top:28.6px" width="6" height="7" viewBox="0 0 6 7"><g fill="none" stroke="#9a8058" stroke-width="0.7"><path d="M1 0.8 L3.8 0.8 L5 2 L5 6.2 L1 6.2 Z"/></g></svg>
  <div class="a t" style="left:72.7px;width:60px;text-align:center;top:39.10000000000002px;font-size:5.5px;color:#2a2a2a">Dokumenty</div>
  <div class="a" style="left:154.4px;top:22.3px;width:8px;height:4px;background:#a88e64;border-radius:1px 1px 0 0"></div>
  <div class="a" style="left:154.4px;top:24.3px;width:16px;height:5px;background:#a88e64;border-radius:1px"></div>
  <div class="a" style="left:153.4px;top:27.0px;width:17.4px;height:10.3px;background:linear-gradient(#eadcc0,#d6c39f);border-bottom:1px solid #9c8058;border-radius:1px"></div>
  <svg class="a" style="left:159.1px;top:28.6px" width="6" height="7" viewBox="0 0 6 7"><g fill="none" stroke="#9a8058" stroke-width="0.7"><path d="M2 5.4 L2 1.2 L5 0.8 L5 4.8"/><circle cx="1.4" cy="5.4" r="0.7"/><circle cx="4.4" cy="4.9" r="0.7"/></g></svg>
  <div class="a t" style="left:132.1px;width:60px;text-align:center;top:39.10000000000002px;font-size:5.5px;color:#2a2a2a">Hudba</div>
  <div class="a" style="left:213.4px;top:22.3px;width:8px;height:4px;background:#a88e64;border-radius:1px 1px 0 0"></div>
  <div class="a" style="left:213.4px;top:24.3px;width:16px;height:5px;background:#a88e64;border-radius:1px"></div>
  <div class="a" style="left:212.4px;top:27.0px;width:17.4px;height:10.3px;background:linear-gradient(#eadcc0,#d6c39f);border-bottom:1px solid #9c8058;border-radius:1px"></div>
  <svg class="a" style="left:218.1px;top:28.6px" width="6" height="7" viewBox="0 0 6 7"><g fill="none" stroke="#9a8058" stroke-width="0.7"><rect x="0.6" y="1.8" width="4.8" height="3.8"/><circle cx="3" cy="3.7" r="1"/></g></svg>
  <div class="a t" style="left:191.1px;width:60px;text-align:center;top:39.10000000000002px;font-size:5.5px;color:#2a2a2a">Obrázky</div>
  <div class="a" style="left:95px;top:53.5px;width:8px;height:4px;background:#a88e64;border-radius:1px 1px 0 0"></div>
  <div class="a" style="left:95px;top:55.5px;width:16px;height:5px;background:#a88e64;border-radius:1px"></div>
  <div class="a" style="left:94px;top:58.2px;width:17.4px;height:10.3px;background:linear-gradient(#eadcc0,#d6c39f);border-bottom:1px solid #9c8058;border-radius:1px"></div>
  <svg class="a" style="left:99.7px;top:59.8px" width="6" height="7" viewBox="0 0 6 7"><g fill="none" stroke="#9a8058" stroke-width="0.7"><rect x="0.8" y="1.2" width="4.4" height="4.4"/></g></svg>
  <div class="a t" style="left:72.7px;width:60px;text-align:center;top:69.89999999999998px;font-size:5.5px;color:#2a2a2a">Plocha</div>
  <div class="a" style="left:154.4px;top:53.5px;width:8px;height:4px;background:#a88e64;border-radius:1px 1px 0 0"></div>
  <div class="a" style="left:154.4px;top:55.5px;width:16px;height:5px;background:#a88e64;border-radius:1px"></div>
  <div class="a" style="left:153.4px;top:58.2px;width:17.4px;height:10.3px;background:linear-gradient(#eadcc0,#d6c39f);border-bottom:1px solid #9c8058;border-radius:1px"></div>
  <svg class="a" style="left:159.1px;top:59.8px" width="6" height="7" viewBox="0 0 6 7"><g fill="none" stroke="#9a8058" stroke-width="0.7"><path d="M3 0.6 L3 4.6 M1.2 2.8 L3 4.8 L4.8 2.8 M0.8 6.2 L5.2 6.2"/></g></svg>
  <div class="a t" style="left:132.1px;width:60px;text-align:center;top:69.89999999999998px;font-size:5.5px;color:#2a2a2a">Stažené</div>
  <div class="a" style="left:213.4px;top:53.5px;width:8px;height:4px;background:#a88e64;border-radius:1px 1px 0 0"></div>
  <div class="a" style="left:213.4px;top:55.5px;width:16px;height:5px;background:#a88e64;border-radius:1px"></div>
  <div class="a" style="left:212.4px;top:58.2px;width:17.4px;height:10.3px;background:linear-gradient(#eadcc0,#d6c39f);border-bottom:1px solid #9c8058;border-radius:1px"></div>
  <svg class="a" style="left:218.1px;top:59.8px" width="6" height="7" viewBox="0 0 6 7"><g fill="none" stroke="#9a8058" stroke-width="0.7"><path d="M1 0.8 L3.8 0.8 L5 2 L5 6.2 L1 6.2 Z"/></g></svg>
  <div class="a t" style="left:191.1px;width:60px;text-align:center;top:69.89999999999998px;font-size:5.5px;color:#2a2a2a">Šablony</div>
  <div class="a" style="left:95px;top:83.5px;width:8px;height:4px;background:#a88e64;border-radius:1px 1px 0 0"></div>
  <div class="a" style="left:95px;top:85.5px;width:16px;height:5px;background:#a88e64;border-radius:1px"></div>
  <div class="a" style="left:94px;top:88.2px;width:17.4px;height:10.3px;background:linear-gradient(#eadcc0,#d6c39f);border-bottom:1px solid #9c8058;border-radius:1px"></div>
  <svg class="a" style="left:99.7px;top:89.8px" width="6" height="7" viewBox="0 0 6 7"><g fill="none" stroke="#9a8058" stroke-width="0.7"><circle cx="1.3" cy="5" r="0.6"/><circle cx="3" cy="2" r="0.6"/><circle cx="4.7" cy="5" r="0.6"/><path d="M1.6 4.5 L2.7 2.5 M3.3 2.5 L4.4 4.5"/></g></svg>
  <div class="a t" style="left:72.7px;width:60px;text-align:center;top:100.39999999999998px;font-size:5.5px;color:#2a2a2a">Veřejné</div>
  <div class="a" style="left:154.4px;top:83.5px;width:8px;height:4px;background:#a88e64;border-radius:1px 1px 0 0"></div>
  <div class="a" style="left:154.4px;top:85.5px;width:16px;height:5px;background:#a88e64;border-radius:1px"></div>
  <div class="a" style="left:153.4px;top:88.2px;width:17.4px;height:10.3px;background:linear-gradient(#eadcc0,#d6c39f);border-bottom:1px solid #9c8058;border-radius:1px"></div>
  <svg class="a" style="left:159.1px;top:89.8px" width="6" height="7" viewBox="0 0 6 7"><g fill="none" stroke="#9a8058" stroke-width="0.7"><path d="M1 2 L3.6 2 L3.6 5 L1 5 Z M3.6 3.5 L5.4 2.2 L5.4 4.8 Z"/></g></svg>
  <div class="a t" style="left:132.1px;width:60px;text-align:center;top:100.39999999999998px;font-size:5.5px;color:#2a2a2a">Videa</div>
</div>
</div>
 <div class="a" style="left:-13.971999999999955px;top:-31.958999999999996px;width:0;height:0;transform:scale(0.241);transform-origin:0 0">
<!-- FIREFOX WINDOW -->
<div class="a win" style="left:92px;top:199px;width:349px;height:223px;background:#fff;overflow:hidden;box-shadow:0 0 2px rgba(0,0,0,0.6)">
  <div class="a" style="left:0;top:0;width:349px;height:23px;background:linear-gradient(#f6f6f6,#e6e6e6)"></div>
  <div class="a t" style="left:116px;top:1.4px;font-size:5px;font-weight:bold;color:#3a3a3a">Projekt Fedora – Úvodní stránka – Mozilla Firefox</div>
  <svg class="a" style="left:338.5px;top:3.5px" width="5" height="5" viewBox="0 0 10 10"><path d="M2 2 L8 8 M8 2 L2 8" stroke="#555" stroke-width="1.8" fill="none"/></svg>
  <!-- tab -->
  <svg class="a" style="left:0;top:14px" width="100" height="10" viewBox="0 14 100 10"><path d="M0 23.5 L4.5 23.5 Q6 23.5 6.8 21 L8.2 16.6 Q8.8 15.3 10.5 15.3 L77.5 15.3 Q79.2 15.3 79.8 16.6 L81.2 21 Q82 23.5 83.5 23.5 L100 23.5" fill="#f4f4f4" stroke="#b4b4b4" stroke-width="0.7"/></svg>
  <div class="a t" style="left:9px;top:14.6px;font-size:5.2px;color:#333">Projekt Fedora - Úvodní ...</div>
  <svg class="a" style="left:76px;top:17px" width="4.5" height="4.5" viewBox="0 0 10 10"><path d="M2 2 L8 8 M8 2 L2 8" stroke="#444" stroke-width="1.7777777777777777" fill="none"/></svg>
  <div class="a t" style="left:86px;top:14.4px;font-size:7px;font-weight:bold;color:#3a6fc0">+</div>
  <!-- nav bar -->
  <div class="a" style="left:0;top:23px;width:349px;height:15px;background:#f0f0f0;border-top:1px solid #c4c4c4;border-bottom:1px solid #c4c4c4"></div>
  <div class="a" style="left:8px;top:27px;width:202px;height:9px;background:#fff;border:1px solid #bdbdbd;border-radius:2px"></div>
  <div class="a" style="left:2.5px;top:25.5px;width:11px;height:11px;background:#f4f4f4;border:1px solid #b8b8b8;border-radius:50%"></div>
  <svg class="a" style="left:4.5px;top:28px" width="7" height="7" viewBox="0 0 7 7"><path d="M1 3.5 L4 1 L4 2.6 L6 2.6 L6 4.4 L4 4.4 L4 6 Z" fill="#8a8a8a"/></svg>
  <div class="a" style="left:16px;top:29px;width:5px;height:5px;border:1px solid #777;border-radius:50%"></div>
  <div class="a t" style="left:22px;top:27px;font-size:5.3px;color:#8a8a8a">start.<span style="color:#222">fedoraproject.org</span></div>
  <svg class="a" style="left:193px;top:28px" width="14" height="7" viewBox="0 0 14 7"><path d="M1 2.5 L2.8 4.3 L4.6 2.5" stroke="#666" stroke-width="0.7" fill="none"/><path d="M11.8 2.2 A2.2 2.2 0 1 0 12 4.5" stroke="#666" stroke-width="0.7" fill="none"/><path d="M10.6 1.2 L12.4 1.6 L11.8 3.2 Z" fill="#666"/></svg>
  <div class="a" style="left:213.5px;top:26.5px;width:66px;height:9px;background:#fff;border:1px solid #bdbdbd;border-radius:2px"></div>
  <div class="a" style="left:216px;top:28px;width:6px;height:6px;background:#4a7fd4"></div>
  <svg class="a" style="left:222.5px;top:29px" width="4" height="4" viewBox="0 0 4 4"><path d="M0.5 1.2 L2 2.8 L3.5 1.2" stroke="#666" stroke-width="0.7" fill="none"/></svg><div class="a t" style="left:229px;top:27px;font-size:5px;color:#999">Google</div>
  <svg class="a" style="left:272.5px;top:27.8px" width="7" height="7" viewBox="0 0 7 7"><circle cx="2.8" cy="2.8" r="1.9" fill="none" stroke="#22448a" stroke-width="1.1"/><path d="M4.2 4.2 L6.2 6.2" stroke="#22448a" stroke-width="1.4"/></svg>
  <svg class="a" style="left:280px;top:27px" width="68" height="10" viewBox="0 0 68 10">
   <path d="M7.4 1.6 L8.3 4.1 L10.6 4.1 L8.8 5.6 L9.5 8 L7.4 6.6 L5.3 8 L6 5.6 L4.2 4.1 L6.5 4.1 Z" fill="none" stroke="#444" stroke-width="0.8"/>
   <rect x="16.2" y="3.4" width="5.4" height="4.4" fill="none" stroke="#444" stroke-width="0.9"/>
   <path d="M17.6 3.4 L17.6 2.2 L20.2 2.2 L20.2 3.4" fill="none" stroke="#444" stroke-width="0.7"/>
   <path d="M31.4 1.8 L31.4 5 M29.6 4.2 L31.4 6.6 L33.2 4.2 Z" stroke="#444" stroke-width="1.1" fill="#444"/>
   <rect x="29.8" y="7" width="3.2" height="1" fill="#444"/>
   <path d="M43.2 4.6 L46 2 L48.8 4.6 L48 4.6 L48 7.6 L44.4 7.6 L44.4 4.6 Z" fill="#444"/>
   <rect x="53.3" y="1.2" width="0.6" height="7.6" fill="#c8c8c8"/>
   <rect x="57.8" y="2.2" width="6.6" height="1.1" fill="#444"/>
   <rect x="57.8" y="4.4" width="6.6" height="1.1" fill="#444"/>
   <rect x="57.8" y="6.6" width="6.6" height="1.1" fill="#444"/>
  </svg>
  <!-- page header -->
  <div class="a" style="left:50.8px;top:45.7px;font-size:15px;line-height:22px;color:#3c6eb4;letter-spacing:0.15px">fedora</div>
  <svg class="a" style="left:95px;top:45.6px" width="10" height="10" viewBox="0 0 10 10"><circle cx="4.6" cy="4.6" r="4.5" fill="#294172"/><path d="M3.4 9 L3.4 4.2 Q3.4 2.2 5.4 2.2 L6.6 2.2 M2.2 4.9 L5.8 4.9" stroke="#fff" stroke-width="1.15" fill="none"/><circle cx="9.4" cy="8.6" r="0.4" fill="#3c6eb4"/></svg>
  <div class="a t" style="left:187.5px;top:45px;font-size:5.4px;color:#3c6eb4">Komunitní projekt sponzorovaný společností</div>
  <div class="a t" style="left:262px;top:52.7px;font-size:5.3px;color:#3c6eb4">Red Hat</div>
  <svg class="a" style="left:283.5px;top:53.5px" width="10" height="9" viewBox="0 0 10 9"><path d="M1 5.5 Q0.5 3.5 2.5 3.5 Q3 0.8 5.5 1 Q8 1.2 8.2 3.8 Q9.8 4.5 9.2 6.2 Q8 8 5 7.6 Q1.5 7.2 1 5.5 Z" fill="#cc1a1a"/><path d="M1.2 5.6 Q5 7.4 9 5.8" stroke="#111" stroke-width="1" fill="none"/></svg>
  <!-- blue nav -->
  <div class="a" style="left:0;top:71px;width:349px;height:30px;background:#3d6bb3"></div>
  <div class="a" style="left:114.5px;top:71px;width:1px;height:30px;background:#b9cbe6"></div>
  <div class="a" style="left:228.2px;top:71px;width:1px;height:30px;background:#b9cbe6"></div>
  <div class="a" style="left:8px;top:83px;width:8px;height:6px;background:#e8eef8;transform:skewX(-15deg);border-radius:1px"></div>
  <div class="a t" style="left:23px;top:81.5px;font-size:8.9px;color:#e3eaf5">Dokumentace Fedory</div>
  <div class="a" style="left:129px;top:82.5px;width:7.5px;height:7.5px;border-radius:50%;background:#fff;color:#3d6bb3;font-size:6px;line-height:7.5px;text-align:center;font-weight:bold">?</div>
  <div class="a t" style="left:143.4px;top:81.5px;font-size:8.8px;color:#e3eaf5">Pomoc uživatelům</div>
  <div class="a t" style="left:158.6px;top:90.7px;font-size:8.8px;color:#e3eaf5">Fedory</div>
  <div class="a" style="left:250px;top:88px;width:9px;height:3px;background:#fff;border-radius:1px"></div>
  <div class="a" style="left:253.5px;top:81px;width:2px;height:5px;background:#fff"></div>
  <div class="a" style="left:251.5px;top:84.5px;width:0;height:0;border-left:3px solid transparent;border-right:3px solid transparent;border-top:3px solid #fff"></div>
  <div class="a t" style="left:263.6px;top:81.5px;font-size:8.7px;color:#e3eaf5">Získejte Fedoru</div>
  <!-- grey news -->
  <div class="a" style="left:0;top:101px;width:349px;height:122px;background:#5b5b5b"></div>
  <div class="a t" style="left:11px;top:108.3px;font-size:6.5px;color:#e0e0e0">Aktuální zprávy z Časopisu Fedora:</div>
  <div class="a t" style="left:22.6px;top:124px;font-size:5px;color:#cfcfcf">APR</div>
  <div class="a t" style="left:20.5px;top:133.5px;font-size:10px;font-weight:bold;color:#f2f2f2">03</div>
  <div class="a" style="left:38.3px;top:126px;width:294.7px;height:52.4px;background:#fff"></div>
  <div class="a" style="left:41px;top:128px;width:28px;height:11.7px;background:linear-gradient(90deg,#1c3770,#2a4a8a);"></div>
  <div class="a t" style="left:49px;top:128.8px;font-size:5px;color:#dfe6f2;font-style:italic">ƒmm</div>
  <div class="a t" style="left:69px;top:130.1px;font-size:8.8px;color:#3c6eb4;white-space:nowrap">Summer of Code, Flock registration, Fedora.next, and</div>
  <div class="a t" style="left:69px;top:139.6px;font-size:8.8px;color:#3c6eb4">more</div>
  <div class="a" style="left:69px;top:151.8px;width:260px;font-size:5.36px;line-height:6.1px;color:#1a1a1a">Google Summer of Code update (mentors wanted!) This year, we have almost 60 students with proposals to work on various parts of Fedora as part of the Google-sponsored Summer of Code 2015. This is clearly awesome. Unfortunately, we don't have… <span style="color:#3c6eb4">Continue Reading →</span>…</div>
  <div class="a" style="left:311.9px;top:126px;width:21px;height:11px;background:#2a4a8a"></div>
  <svg class="a" style="left:314.5px;top:128.5px" width="6" height="6" viewBox="0 0 6 6"><ellipse cx="3" cy="2.6" rx="2.7" ry="2" fill="#fff"/><path d="M1.2 3.8 L0.8 5.6 L2.8 4.3 Z" fill="#fff"/></svg><div class="a t" style="left:322px;top:126.5px;font-size:5.5px;color:#fff">0</div>
  <div class="a" style="left:267px;top:173.4px;width:38.7px;height:10.2px;background:#3c6eb4;border-radius:2px"></div>
  <div class="a t" style="left:270.5px;top:173.5px;font-size:5.3px;color:#e8eef8">Read more ...</div>
  <div class="a t" style="left:21.5px;top:191.3px;font-size:5px;color:#cfcfcf">MAR</div>
  <div class="a t" style="left:20.5px;top:200.7px;font-size:10px;font-weight:bold;color:#f2f2f2">25</div>
  <div class="a" style="left:38.3px;top:192.8px;width:294.7px;height:40px;background:#fff"></div>
  <div class="a" style="left:41px;top:194.8px;width:28px;height:11.7px;background:linear-gradient(90deg,#1c3770,#2a4a8a);"></div>
  <div class="a t" style="left:49px;top:195.6px;font-size:5px;color:#dfe6f2;font-style:italic">ƒmm</div>
  <div class="a t" style="left:69px;top:198px;font-size:8.9px;color:#3c6eb4;white-space:nowrap">Fedora conferences this summer, writing release notes,</div>
  <div class="a t" style="left:69px;top:207px;font-size:8.9px;color:#3c6eb4;white-space:nowrap">brainstorming a better onramp, and a GSOC reminder</div>
  <div class="a t" style="left:69px;top:216.5px;font-size:5.36px;color:#1a1a1a;white-space:nowrap">Fedora is a big project, and it's hard to keep up with everything. This series highlights interesting</div>
  <div class="a" style="left:311.9px;top:192.8px;width:21px;height:11px;background:#2a4a8a"></div>
  <svg class="a" style="left:314.5px;top:195.3px" width="6" height="6" viewBox="0 0 6 6"><ellipse cx="3" cy="2.6" rx="2.7" ry="2" fill="#fff"/><path d="M1.2 3.8 L0.8 5.6 L2.8 4.3 Z" fill="#fff"/></svg><div class="a t" style="left:322px;top:193.3px;font-size:5.5px;color:#fff">0</div>
  <!-- scrollbar -->
  <div class="a" style="left:344px;top:38px;width:5px;height:185px;background:#d9d9d9;border-left:1px solid #c8c8c8"></div>
  <div class="a" style="left:345px;top:40px;width:3px;height:58px;background:#9a9a9a;border-radius:2px"></div>
</div>
</div>
</div>
<div class="a wall" style="left:785px;top:161px;width:115px;height:71.8px;overflow:hidden">
 <div class="a" style="left:85px;top:40px;width:50px;height:40px;border-radius:50%;background:radial-gradient(ellipse,rgba(130,160,185,0.5),rgba(40,70,100,0) 70%)"></div>
 <div class="a" style="left:1.5px;top:8.2px;width:100.7px;height:70px;background:#ececec">
  <div class="a" style="left:0;top:0;width:100.7px;height:6px;background:#e2e2e2"></div>
  <div class="a" style="left:35px;top:1.2px;width:34px;height:3px;background:#d0d0d0;border-radius:1px"></div>
  <div class="a" style="left:0;top:6px;width:100.7px;height:4px;background:#d6d6d6"></div>
  <div class="a" style="left:30px;top:6.7px;width:42px;height:2.6px;background:#fafafa"></div>
  <div class="a" style="left:8px;top:11.5px;width:18px;height:1px;background:#b0b0b0"></div>
  <div class="a" style="left:7.2px;top:13.3px;width:85.6px;height:21.3px;background:linear-gradient(90deg,#c9d3c1,#bccab2)"></div>
  <svg class="a" style="left:15px;top:10.3px" width="40" height="28" viewBox="0 0 40 28">
   <defs><linearGradient id="ink" x1="0" y1="0" x2="1" y2="0"><stop offset="0" stop-color="#555"/><stop offset="0.5" stop-color="#1a1a1a"/><stop offset="1" stop-color="#333"/></linearGradient></defs>
   <ellipse cx="17" cy="24.2" rx="10" ry="2.2" fill="#151515"/>
   <rect x="27.5" y="23.6" width="4.5" height="1.8" fill="#222"/>
   <path d="M17.5 2.8 C19 2.5 20 3 21 4 L34 19 C35.5 21 34.5 22.5 32 22.5 L5 22.5 C2.5 22.5 1.5 21 3 19 L14 4 C15 3 16 2.6 17.5 2.8 Z" fill="url(#ink)"/>
   <path d="M17.5 2.8 C16 2.6 15 3 14 4 L9.5 10 L13 8.8 L16 10.5 L19 8.6 L22.5 10 L26 9.4 L21 4 C20 3 19 2.5 17.5 2.8 Z" fill="#f0f0f4"/>
  </svg>
  <div class="a" style="left:59px;top:26.6px;width:13px;height:2.2px;background:#3a3a3a"></div>
  <div class="a" style="left:59px;top:30.6px;width:27px;height:1px;background:#7a8a70"></div>
  <div class="a" style="left:8px;top:37.5px;width:16px;height:1px;background:#b0b0b0"></div>
  <div class="a" style="left:7.5px;top:40.6px;width:12.4px;height:12.2px;background:#f9f9f9;border-radius:1px"></div><div class="a" style="left:11.2px;top:42.6px;width:5px;height:5px;border-radius:50%;background:#8a5a3a"></div><div class="a" style="left:10.0px;top:49.1px;width:7.5px;height:0.8px;background:#bbb"></div><div class="a" style="left:21.8px;top:40.6px;width:12.4px;height:12.2px;background:#f9f9f9;border-radius:1px"></div><div class="a" style="left:25.5px;top:42.6px;width:5px;height:5px;border-radius:50%;background:#d04a8a"></div><div class="a" style="left:24.3px;top:49.1px;width:7.5px;height:0.8px;background:#bbb"></div><div class="a" style="left:36.1px;top:40.6px;width:12.4px;height:12.2px;background:#f9f9f9;border-radius:1px"></div><div class="a" style="left:39.800000000000004px;top:42.6px;width:5px;height:5px;border-radius:50%;background:#333"></div><div class="a" style="left:38.6px;top:49.1px;width:7.5px;height:0.8px;background:#bbb"></div><div class="a" style="left:50.400000000000006px;top:40.6px;width:12.4px;height:12.2px;background:#f9f9f9;border-radius:1px"></div><div class="a" style="left:54.10000000000001px;top:42.6px;width:5px;height:5px;border-radius:50%;background:#c87a3a"></div><div class="a" style="left:52.900000000000006px;top:49.1px;width:7.5px;height:0.8px;background:#bbb"></div><div class="a" style="left:64.7px;top:40.6px;width:12.4px;height:12.2px;background:#f9f9f9;border-radius:1px"></div><div class="a" style="left:68.4px;top:42.6px;width:5px;height:5px;border-radius:50%;background:#3a7ad0"></div><div class="a" style="left:67.2px;top:49.1px;width:7.5px;height:0.8px;background:#bbb"></div><div class="a" style="left:79.0px;top:40.6px;width:12.4px;height:12.2px;background:#f9f9f9;border-radius:1px"></div><div class="a" style="left:82.7px;top:42.6px;width:5px;height:5px;border-radius:50%;background:#e8c060"></div><div class="a" style="left:81.5px;top:49.1px;width:7.5px;height:0.8px;background:#bbb"></div>
  <div class="a" style="left:8px;top:55.5px;width:22px;height:1px;background:#b0b0b0"></div>
  <div class="a" style="left:7.5px;top:57.8px;width:12.4px;height:12.2px;background:#f9f9f9;border-radius:1px"></div><div class="a" style="left:11.2px;top:59.8px;width:5px;height:5px;border-radius:50%;background:#aaa"></div><div class="a" style="left:10.0px;top:66.3px;width:7.5px;height:0.8px;background:#bbb"></div><div class="a" style="left:21.8px;top:57.8px;width:12.4px;height:12.2px;background:#f9f9f9;border-radius:1px"></div><div class="a" style="left:25.5px;top:59.8px;width:5px;height:5px;border-radius:50%;background:#e07a20"></div><div class="a" style="left:24.3px;top:66.3px;width:7.5px;height:0.8px;background:#bbb"></div><div class="a" style="left:36.1px;top:57.8px;width:12.4px;height:12.2px;background:#f9f9f9;border-radius:1px"></div><div class="a" style="left:39.800000000000004px;top:59.8px;width:5px;height:5px;border-radius:50%;background:#3a6a9a"></div><div class="a" style="left:38.6px;top:66.3px;width:7.5px;height:0.8px;background:#bbb"></div><div class="a" style="left:50.400000000000006px;top:57.8px;width:12.4px;height:12.2px;background:#f9f9f9;border-radius:1px"></div><div class="a" style="left:54.10000000000001px;top:59.8px;width:5px;height:5px;border-radius:50%;background:#f09030"></div><div class="a" style="left:52.900000000000006px;top:66.3px;width:7.5px;height:0.8px;background:#bbb"></div><div class="a" style="left:64.7px;top:57.8px;width:12.4px;height:12.2px;background:#f9f9f9;border-radius:1px"></div><div class="a" style="left:68.4px;top:59.8px;width:5px;height:5px;border-radius:50%;background:#3030a0"></div><div class="a" style="left:67.2px;top:66.3px;width:7.5px;height:0.8px;background:#bbb"></div><div class="a" style="left:79.0px;top:57.8px;width:12.4px;height:12.2px;background:#f9f9f9;border-radius:1px"></div><div class="a" style="left:82.7px;top:59.8px;width:5px;height:5px;border-radius:50%;background:#5a9a3a"></div><div class="a" style="left:81.5px;top:66.3px;width:7.5px;height:0.8px;background:#bbb"></div>
 </div>
</div>
<div class="a wall3" style="left:785px;top:241px;width:115px;height:70px;overflow:hidden">
 <div class="a" style="left:-8px;top:50px;width:46px;height:30px;border-radius:50%;background:radial-gradient(ellipse,rgba(205,220,232,0.85),rgba(120,150,175,0.3) 50%,rgba(60,90,115,0) 72%)"></div>
 <div class="a" style="left:40px;top:56px;width:28px;height:20px;border-radius:50%;background:radial-gradient(ellipse,rgba(190,205,220,0.75),rgba(60,90,115,0) 70%)"></div>
 <div class="a" style="left:82px;top:46px;width:44px;height:34px;border-radius:50%;background:radial-gradient(ellipse,rgba(205,220,232,0.85),rgba(120,150,175,0.3) 50%,rgba(60,90,115,0) 72%)"></div>
 <div class="a" style="left:95px;top:22px;width:20px;height:24px;border-radius:50%;background:radial-gradient(ellipse,rgba(120,150,175,0.35),rgba(60,90,115,0) 70%)"></div>
</div>
<svg class="a" style="left:800px;top:545px" width="100" height="39" viewBox="800 545 100 39">
 <g fill="none" stroke="#53575d" stroke-width="2.4">
  <path d="M814.4 574.4 L814.4 560 Q814.4 555.6 819 555.6 L820.8 555.6"/>
  <path d="M810.6 564 L819 564"/>
  <path d="M822.6 568.2 L832.4 568.2 A4.9 4.9 0 1 0 830.6 572"/>
  <circle cx="842.2" cy="568.2" r="4.9"/>
  <path d="M847.3 554.6 L847.3 574.4"/>
  <circle cx="857" cy="568.2" r="4.9"/>
  <path d="M866.6 574.4 L866.6 568.6 A5.2 5.2 0 0 1 873.8 563.6"/>
  <circle cx="881.6" cy="568.2" r="4.9"/>
  <path d="M886.6 563.2 L886.6 574.4"/>
 </g>
</svg>
<!-- ANNOTATIONS -->
<svg class="a" style="left:0;top:0" width="900" height="584" viewBox="0 0 900 584">
 <defs><marker id="ah" viewBox="0 0 10 10" refX="9" refY="5" markerWidth="5" markerHeight="5" orient="auto"><path d="M0 0 L10 5 L0 10 L3 5 Z" fill="#fff"/></marker></defs>
 <g stroke="#fff" stroke-width="1.8" fill="none">
  <line x1="143.3" y1="113.7" x2="78" y2="143" marker-end="url(#ah)"/>
  <line x1="140" y1="526" x2="61" y2="509" marker-end="url(#ah)"/>
  <line x1="416.7" y1="114.2" x2="440" y2="66" marker-end="url(#ah)"/>
  <line x1="688.9" y1="143" x2="763" y2="127.5" marker-end="url(#ah)"/>
 </g>
 <g fill="#0b0d5a" stroke="#fff" stroke-width="2">
  <circle cx="163.3" cy="110.3" r="11.4"/>
  <circle cx="160" cy="530" r="11.4"/>
  <circle cx="409.3" cy="129.5" r="11.4"/>
  <circle cx="672" cy="149" r="11.4"/>
 </g>
 <g fill="#fff" font-family="Liberation Sans" font-size="13" text-anchor="middle">
  <text x="163.3" y="115">1</text>
  <text x="160" y="534.7">2</text>
  <text x="409.3" y="134.2">3</text>
  <text x="672" y="153.7">4</text>
 </g>
</svg>
</div></body></html>
